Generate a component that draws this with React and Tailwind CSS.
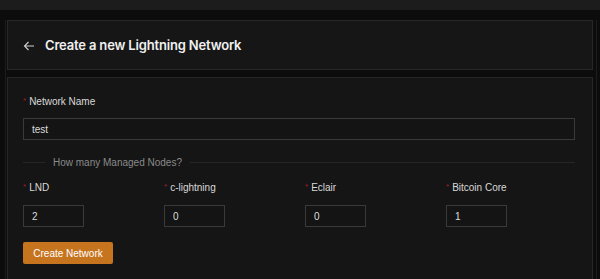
import React from "react";

function Field({ label, value, wide, gap }) {
  return (
    <div className="flex flex-col">
      <div className="flex items-center h-[14px] text-[10px] text-[#d9d9d9]">
        <span className="text-[#a61d24] text-[8px] mr-[3px] leading-none">*</span>
        <span>{label}</span>
      </div>
      <div
        className={`h-[22px] border border-[#3a3a3a] bg-[#141414] flex items-center pl-[8px] text-[10px] text-[#dcdcdc] ${gap} ${wide ? "w-full" : "w-[61px]"}`}
      >
        {value}
      </div>
    </div>
  );
}

export default function App() {
  return (
    <div
      className="w-[600px] h-[279px] overflow-hidden bg-[#0c0c0c] flex flex-col"
      style={{ fontFamily: "'Liberation Sans', Arial, sans-serif" }}
    >
      <div className="h-[10px] bg-[#1c1c1c] shrink-0" />
      <div className="flex-1 flex pl-[5px] pr-[3px] pt-[10px] min-w-0">
        <div className="w-[1px] bg-[#1c1c1c]" />
        <div className="flex-1 min-w-0 flex flex-col pl-[1px] pr-[3px] gap-[7px]">
          <div className="h-[50px] bg-[#161616] border border-[#272727] flex items-center pl-[15px]">
            <svg width="12" height="12" viewBox="0 0 12 12" className="text-[#d0d0d0] mt-[1px]">
              <path d="M11 6H1.5M5.5 2L1.5 6L5.5 10" fill="none" stroke="currentColor" strokeWidth="1.1" />
            </svg>
            <span
              className="ml-[10px] mt-[1px] text-[13px] font-semibold text-[#f0f0f0] tracking-[-0.17px]"
              style={{ fontFamily: "Inter, 'Liberation Sans', sans-serif" }}
            >
              Create a new Lightning Network
            </span>
          </div>
          <div className="flex-1 bg-[#151515] border border-[#272727] border-b-0 pl-[15px] pr-[17px] pt-[16px]">
            <Field label="Network Name" value="test" wide gap="mt-[10px]" />
            <div className="flex items-center mt-[15px] h-[14px]">
              <div className="w-[22px] h-[1px] bg-[#262626]" />
              <span className="px-[8px] text-[10px] text-[#8a8a8a]">How many Managed Nodes?</span>
              <div className="flex-1 h-[1px] bg-[#262626]" />
            </div>
            <div className="grid grid-cols-[141px_141px_141px_141px] mt-[11px]">
              <Field label="LND" value="2" gap="mt-[11px]" />
              <Field label="c-lightning" value="0" gap="mt-[11px]" />
              <Field label="Eclair" value="0" gap="mt-[11px]" />
              <Field label="Bitcoin Core" value="1" gap="mt-[11px]" />
            </div>
            <button className="mt-[15px] h-[22px] w-[90px] bg-[#c7741f] text-[10px] text-white rounded-[2px]">
              Create Network
            </button>
          </div>
        </div>
        <div className="w-[1px] bg-[#1c1c1c]" />
      </div>
    </div>
  );
}
